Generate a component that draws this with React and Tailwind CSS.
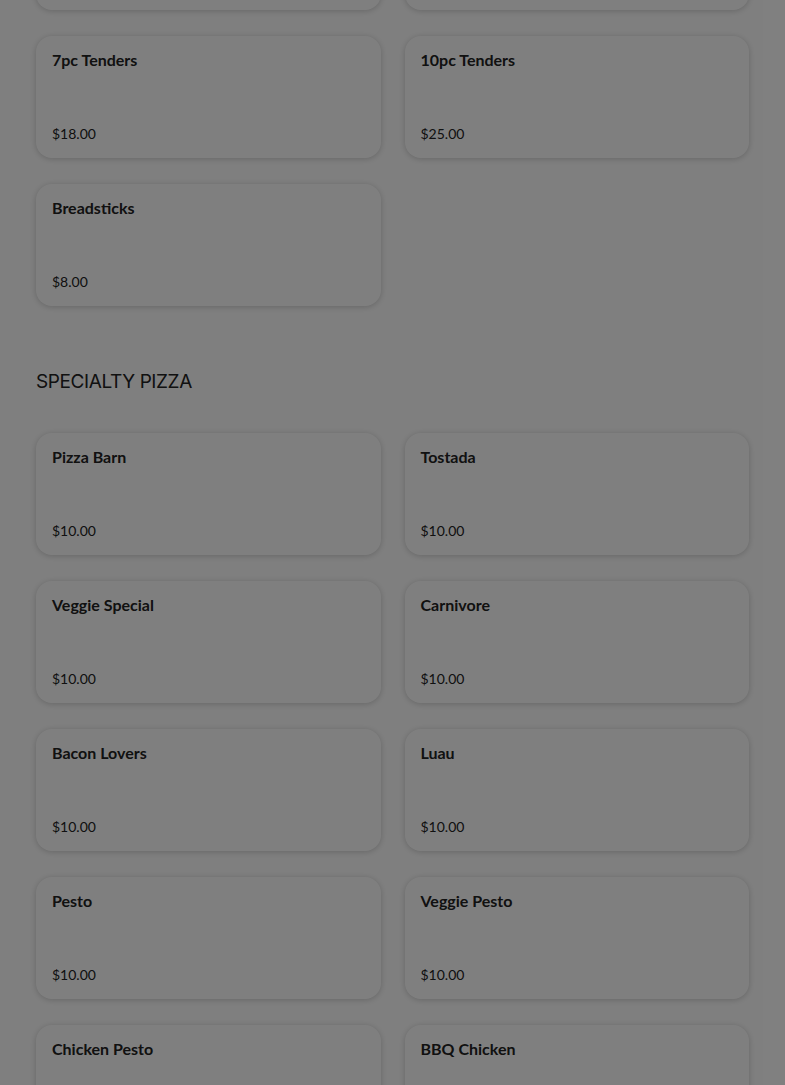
import React from "react";

function Card({ name, price }) {
  return (
    <div className="h-[122px] rounded-2xl bg-white shadow-[0_1px_6px_rgba(0,0,0,0.2)] px-4 pt-4 pb-4 flex flex-col justify-between">
      <div className="text-[16px] leading-4 font-bold text-[#222] font-['Lato',sans-serif]">{name}</div>
      <div className="text-[14px] leading-4 text-[#222] font-['Lato',sans-serif]">{price}</div>
    </div>
  );
}

const pizzas = [
  ["Pizza Barn", "$10.00"],
  ["Tostada", "$10.00"],
  ["Veggie Special", "$10.00"],
  ["Carnivore", "$10.00"],
  ["Bacon Lovers", "$10.00"],
  ["Luau", "$10.00"],
  ["Pesto", "$10.00"],
  ["Veggie Pesto", "$10.00"],
  ["Chicken Pesto", "$10.00"],
  ["BBQ Chicken", "$10.00"],
];

export default function App() {
  return (
    <div className="relative h-[1085px] overflow-hidden bg-white">
      <div className="px-9 mt-[-112px]">
        <div className="grid grid-cols-2 gap-x-6 gap-y-[26px]">
          <div className="h-[122px] rounded-2xl bg-white shadow-[0_1px_6px_rgba(0,0,0,0.2)]" />
          <div className="h-[122px] rounded-2xl bg-white shadow-[0_1px_6px_rgba(0,0,0,0.2)]" />
          <Card name="7pc Tenders" price="$18.00" />
          <Card name="10pc Tenders" price="$25.00" />
          <Card name="Breadsticks" price="$8.00" />
        </div>
        <h2 className="mt-[63px] mb-[38px] text-[19px] leading-[26px] text-[#222] font-['Inter',sans-serif] tracking-[-0.4px]">
          SPECIALTY PIZZA
        </h2>
        <div className="grid grid-cols-2 gap-x-6 gap-y-[26px]">
          {pizzas.map(([n, p]) => (
            <Card key={n} name={n} price={p} />
          ))}
        </div>
      </div>
      <div className="absolute inset-0 bg-black/50" />
    </div>
  );
}
